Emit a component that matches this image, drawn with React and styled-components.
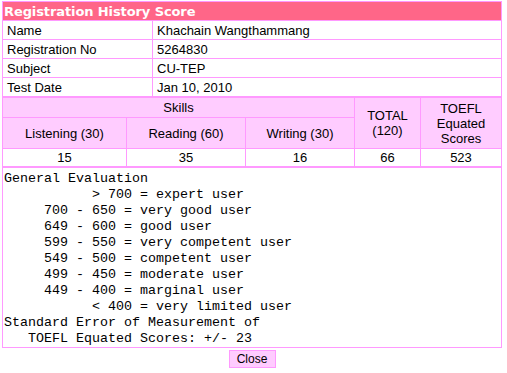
import React from "react";
import styled, { createGlobalStyle } from "styled-components";

const Global = createGlobalStyle`
  html, body { margin: 0; padding: 0; background: #ffffff; }
  body { font-family: "Liberation Sans", Arial, sans-serif; font-size: 13px; color: #000; }
`;

const Page = styled.div`
  width: 500px;
  padding: 1px 0 0 2px;
  display: flex;
  flex-direction: column;
  align-items: center;
`;

const Table = styled.table`
  width: 500px;
  border-collapse: collapse;
  border: 1px solid #ff99ff;
  table-layout: fixed;
  font-size: 13px;
`;

const TitleCell = styled.th`
  background: #ff6688;
  color: #ffffff;
  font-family: "DejaVu Sans", Verdana, sans-serif;
  font-weight: bold;
  font-size: 13px;
  letter-spacing: -0.1px;
  text-align: left;
  height: 18px;
  padding: 0 1px;
  border: 1px solid #ff99ff;
`;

const InfoCell = styled.td`
  height: 18px;
  padding: 0 4px;
  border: 1px solid #ff99ff;
  background: #ffffff;
  text-align: left;
  white-space: nowrap;
`;

const HeadCell = styled.td`
  background: #ffccff;
  border: 1px solid #ff99ff;
  text-align: center;
  padding: 0 2px;
  height: ${(p) => p.$h || "auto"};
  line-height: 15px;
`;

const ScoreCell = styled.td`
  background: #ffffff;
  border: 1px solid #ff99ff;
  text-align: center;
  height: 17px;
  padding: 0;
`;

const Evaluation = styled.pre`
  box-sizing: border-box;
  width: 500px;
  margin: 0;
  border: 1px solid #ff99ff;
  padding: 3px 1px 0 1px;
  font-family: "Liberation Mono", "Courier New", monospace;
  font-size: 13.33px;
  line-height: 16px;
  color: #000;
  background: #fff;
`;

const CloseButton = styled.button`
  margin-top: 2px;
  width: 47px;
  height: 18px;
  padding: 0;
  background: #ffccff;
  border: 1px solid #ff99ff;
  font-family: "Liberation Sans", Arial, sans-serif;
  font-size: 12px;
  color: #000;
  display: flex;
  align-items: center;
  justify-content: center;
`;

const info = [
  ["Name", "Khachain Wangthammang"],
  ["Registration No", "5264830"],
  ["Subject", "CU-TEP"],
  ["Test Date", "Jan 10, 2010"],
];

const evalText = `General Evaluation
           > 700 = expert user
     700 - 650 = very good user
     649 - 600 = good user
     599 - 550 = very competent user
     549 - 500 = competent user
     499 - 450 = moderate user
     449 - 400 = marginal user
           < 400 = very limited user
Standard Error of Measurement of
   TOEFL Equated Scores: +/- 23`;

export default function App() {
  return (
    <>
      <Global />
      <Page>
        <Table>
          <colgroup>
            <col style={{ width: 150 }} />
            <col />
          </colgroup>
          <tbody>
            <tr>
              <TitleCell colSpan={2}>Registration History Score</TitleCell>
            </tr>
            {info.map(([k, v]) => (
              <tr key={k}>
                <InfoCell>{k}</InfoCell>
                <InfoCell>{v}</InfoCell>
              </tr>
            ))}
          </tbody>
        </Table>
        <Table>
          <colgroup>
            <col style={{ width: 124 }} />
            <col style={{ width: 119 }} />
            <col style={{ width: 109 }} />
            <col style={{ width: 66 }} />
            <col />
          </colgroup>
          <tbody>
            <tr>
              <HeadCell colSpan={3} $h="19px">Skills</HeadCell>
              <HeadCell rowSpan={2}>TOTAL<br />(120)</HeadCell>
              <HeadCell rowSpan={2}>TOEFL<br />Equated<br />Scores</HeadCell>
            </tr>
            <tr>
              <HeadCell $h="30px">Listening (30)</HeadCell>
              <HeadCell $h="30px">Reading (60)</HeadCell>
              <HeadCell $h="30px">Writing (30)</HeadCell>
            </tr>
            <tr>
              <ScoreCell>15</ScoreCell>
              <ScoreCell>35</ScoreCell>
              <ScoreCell>16</ScoreCell>
              <ScoreCell>66</ScoreCell>
              <ScoreCell>523</ScoreCell>
            </tr>
          </tbody>
        </Table>
        <Evaluation>{evalText}</Evaluation>
        <CloseButton type="button">Close</CloseButton>
      </Page>
    </>
  );
}
